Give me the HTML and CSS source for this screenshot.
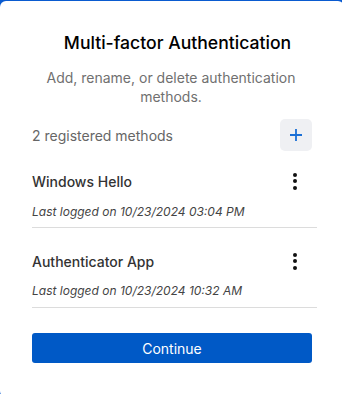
FILE: index.html
```html
<!DOCTYPE html>
<html lang="en">
<head>
    <meta charset="UTF-8">
    <meta name="viewport" content="width=device-width, initial-scale=1.0">
    <title>Multi-factor Authentication</title>
    <link rel="stylesheet" href="styles.css">
</head>
<body>
    <div class="card">
        <h1 class="title">Multi-factor Authentication</h1>
        <p class="subtitle">Add, rename, or delete authentication methods.</p>

        <div class="methods">
            <div class="methods-header">
                <span class="count">2 registered methods</span>
                <button class="add-btn" aria-label="Add method">
                    <svg width="14" height="14" viewBox="0 0 14 14">
                        <path d="M7 1v12M1 7h12" stroke="#1a6fd6" stroke-width="1.8" fill="none"/>
                    </svg>
                </button>
            </div>

            <div class="method">
                <div class="method-top">
                    <span class="method-name">Windows Hello</span>
                    <span class="kebab"><i></i><i></i><i></i></span>
                </div>
                <div class="method-date">Last logged on 10/23/2024 03:04 PM</div>
            </div>

            <div class="method">
                <div class="method-top">
                    <span class="method-name">Authenticator App</span>
                    <span class="kebab"><i></i><i></i><i></i></span>
                </div>
                <div class="method-date">Last logged on 10/23/2024 10:32 AM</div>
            </div>

            <button class="continue">Continue</button>
        </div>
    </div>
</body>
</html>
```

FILE: styles.css
```css
* {
    margin: 0;
    padding: 0;
    box-sizing: border-box;
}

body {
    font-family: 'Inter', 'Noto Sans', sans-serif;
    background: #0a5bd0;
    height: 394px;
    overflow: hidden;
}

.card {
    background: #fff;
    margin-top: 1px;
    width: 344px;
    height: 396px;
    border-radius: 6px;
    padding-top: 31px;
}

.title {
    font-size: 17.6px;
    line-height: 22px;
    font-weight: 500;
    color: #000;
    text-align: center;
    padding-left: 14px;
    padding-right: 3px;
}

.subtitle {
    margin-top: 14px;
    font-size: 14px;
    line-height: 19px;
    color: #707070;
    text-align: center;
    padding: 0 46px 0 44px;
}

.methods {
    margin: 14px 27px 0 32px;
}

.methods-header {
    height: 30px;
    display: flex;
    align-items: center;
    justify-content: space-between;
}

.count {
    font-size: 14px;
    color: #666;
    padding-top: 1px;
}

.add-btn {
    width: 32px;
    height: 32px;
    margin-right: 5px;
    border: none;
    border-radius: 5px;
    background: #eff0f3;
    display: flex;
    align-items: center;
    justify-content: center;
}

.method {
    padding: 21px 0 7px;
    border-bottom: 1px solid #dcdcdc;
}

.method-top {
    height: 20px;
    display: flex;
    align-items: center;
    justify-content: space-between;
}

.method-name {
    font-size: 14px;
    font-weight: 500;
    color: #333;
}

.kebab {
    display: flex;
    flex-direction: column;
    gap: 2.5px;
    margin-right: 20px;
}

.kebab i {
    width: 4px;
    height: 4px;
    border-radius: 50%;
    background: #111;
}

.method-date {
    margin-top: 13px;
    font-size: 12px;
    line-height: 16px;
    font-style: italic;
    color: #444;
}

.method + .method {
    padding: 23px 0 8px;
}

.method + .method .method-date {
    margin-top: 12px;
}

.continue {
    display: block;
    margin-top: 25px;
    width: 280px;
    height: 30px;
    border: none;
    border-radius: 3px;
    background: #0059c6;
    color: #fff;
    font-family: 'Inter', 'Noto Sans', sans-serif;
    font-size: 14px;
}
```
